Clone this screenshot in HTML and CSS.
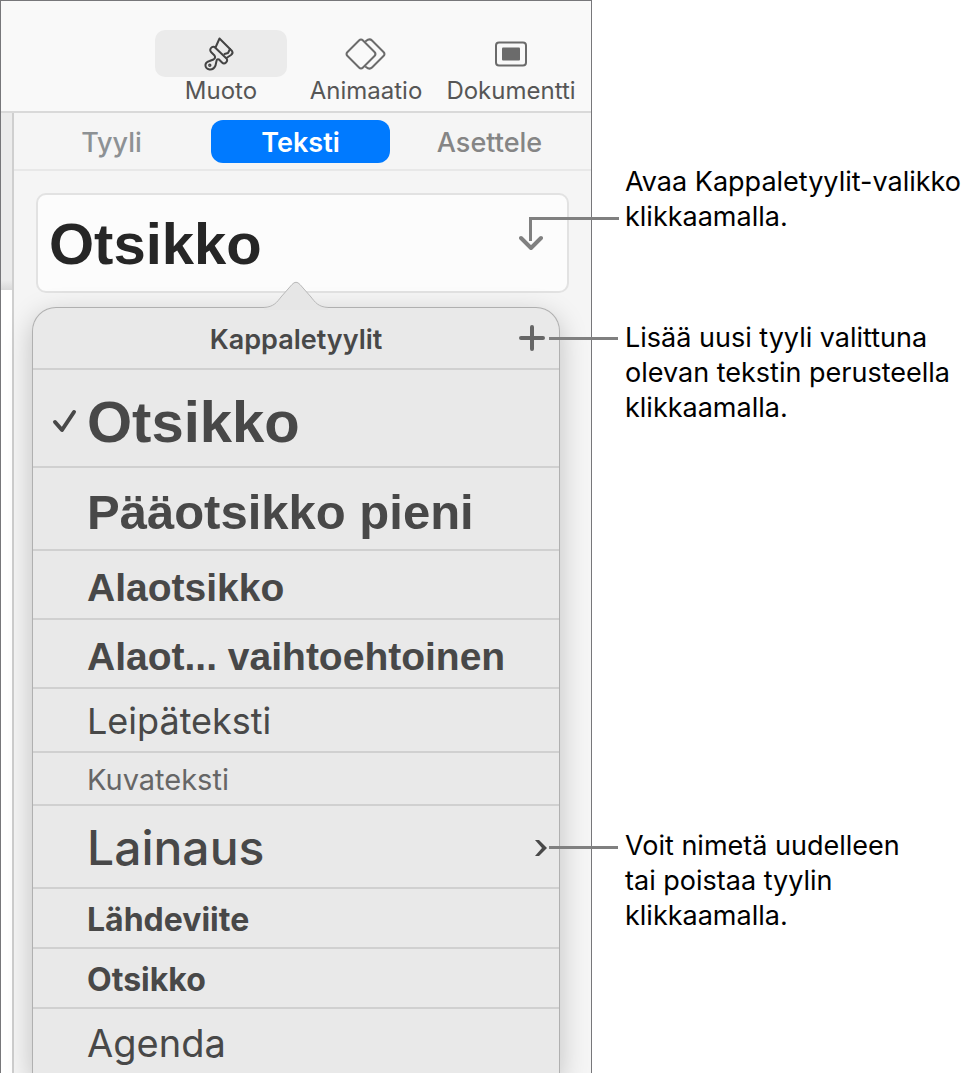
FILE: index.html
```
<!DOCTYPE html>
<html lang="fi">
<head>
  <meta charset="UTF-8">
  <meta name="viewport" content="width=device-width, initial-scale=1">
  <title>Kappaletyylit</title>
  <link rel="stylesheet" href="styles.css">
</head>
<body>
  <main class="figure">
    <div class="window">
      <!-- Työkalupalkki -->
      <header class="toolbar">
        <button type="button" class="tool active">
          <span class="tool-icon">
            <svg width="34" height="34" viewBox="0 0 34 34">
              <path d="M11.500 10.500 L15.500 1.500 L28 14 Q29.500 16 27 18 L22.500 21"/>
              <path d="M26 12 L24 16 L20.500 17"/>
              <path d="M10.500 10 L22.500 21.500 Q24 23.500 22 25.500 Q20 27.500 18 25.500 L15 22.500 Q13 21.500 12.500 24 L11.500 28.500 Q9.500 33 5.500 32.500 Q1 31.500 1.500 27.500 Q2 25 5.500 24 L9.500 22.500 Q12 21 10.500 18.500 L7 15 Q5.500 13 7 11 Q8.500 9 10.500 10Z"/>
              <circle cx="5.800" cy="28.300" r="0.700"/>
            </svg>
          </span>
          Muoto
        </button>
        <button type="button" class="tool">
          <span class="tool-icon">
            <svg width="42" height="34" viewBox="0 0 42 34">
              <path d="M14 3.500 Q16 1.500 18 3.500 L29.500 15 Q31.500 17 29.500 19 L18 30.500 Q16 32.500 14 30.500 L2.500 19 Q0.500 17 2.500 15Z"/>
              <path d="M21 4 Q24.500 1 27 3.500 L38.500 15 Q40.500 17 38.500 19 L27 30.500 Q24.500 33 21 30"/>
            </svg>
          </span>
          Animaatio
        </button>
        <button type="button" class="tool">
          <span class="tool-icon">
            <svg width="34" height="26" viewBox="0 0 34 26">
              <rect x="2" y="1.500" width="30" height="23" rx="3"/>
              <rect class="solid" x="8" y="6.500" width="18" height="13" rx="1"/>
            </svg>
          </span>
          Dokumentti
        </button>
      </header>

      <div class="workspace">
        <div class="canvas"></div>
        <aside class="sidebar">
          <nav class="tabs">
            <button type="button" class="tab tab-first">Tyyli</button>
            <button type="button" class="tab selected">Teksti</button>
            <button type="button" class="tab">Asettele</button>
          </nav>

          <div class="style-area">
            <button type="button" class="style-field">
              Otsikko
              <svg class="open-arrow" width="24" height="16" viewBox="0 0 24 16">
                <path d="M2 3 L12 13 L22 3"/>
              </svg>
              <span class="leader leader-open"></span>
            </button>

            <!-- Kappaletyylit-valikko -->
            <section class="popover">
              <svg class="popover-tip" width="64" height="29" viewBox="0 0 64 29">
                <path d="M0 26.500 C10 26 13 21 17 16 L28 3.500 Q32 -1 36 3.500 L47 16 C51 21 54 26 64 26.500 V29 H0Z"/>
                <path class="outline" d="M0 26.500 C10 26 13 21 17 16 L28 3.500 Q32 -1 36 3.500 L47 16 C51 21 54 26 64 26.500"/>
              </svg>
              <header class="popover-header">
                <h2>Kappaletyylit</h2>
                <button type="button" class="add-btn" aria-label="Lisää tyyli">
                  <svg width="26" height="26" viewBox="0 0 26 26">
                    <path d="M13 2 V24 M2 13 H24"/>
                  </svg>
                </button>
                <span class="leader leader-row"></span>
              </header>
              <ul class="style-list">
                <li class="style-title">
                  <svg class="check" width="26" height="26" viewBox="0 0 26 26">
                    <path d="M3 14 L10 22 L22 4"/>
                  </svg>
                  <button type="button">Otsikko</button>
                </li>
                <li class="style-title-small"><button type="button">Pääotsikko pieni</button></li>
                <li class="style-subtitle"><button type="button">Alaotsikko</button></li>
                <li class="style-subtitle"><button type="button">Alaot... vaihtoehtoinen</button></li>
                <li class="style-body"><button type="button">Leipäteksti</button></li>
                <li class="style-caption"><button type="button">Kuvateksti</button></li>
                <li class="style-quote">
                  <button type="button">Lainaus</button>
                  <button type="button" class="more-btn" aria-label="Muokkaa tyyliä">
                    <svg width="12" height="16" viewBox="0 0 12 16">
                      <path d="M0 0 H4 L12 8 L4 16 H0 L7 8Z"/>
                    </svg>
                  </button>
                  <span class="leader leader-row"></span>
                </li>
                <li class="style-label"><button type="button">Lähdeviite</button></li>
                <li class="style-label"><button type="button">Otsikko</button></li>
                <li class="style-agenda"><button type="button">Agenda</button></li>
              </ul>
            </section>
          </div>
        </aside>
      </div>
    </div>

    <!-- Selitteet -->
    <div class="callouts">
      <p>Avaa Kappaletyylit-valikko<br>klikkaamalla.</p>
      <p>Lisää uusi tyyli valittuna<br>olevan tekstin perusteella<br>klikkaamalla.</p>
      <p class="callout-quote">Voit nimetä uudelleen<br>tai poistaa tyylin<br>klikkaamalla.</p>
    </div>
  </main>
</body>
</html>
```
FILE: styles.css
```
* {
  box-sizing: border-box;
}
body {
  margin: 0;
  background: #fff;
  color: #000;
  font-family: Inter, Roboto, "Liberation Sans", sans-serif;
}
button {
  padding: 0;
  border: none;
  background: none;
  color: inherit;
  font: inherit;
  text-align: left;
  cursor: pointer;
}
svg {
  display: block;
  fill: none;
  stroke-linecap: round;
  stroke-linejoin: round;
}
.figure {
  display: grid;
  grid-template-columns: minmax(0, 1fr) 383px;
  min-height: 100vh;
}
.window {
  display: flex;
  flex-direction: column;
  border: 1px solid #77777a;
  border-bottom: none;
  background: #f5f5f5;
}

/* toolbar */
.toolbar {
  display: flex;
  justify-content: flex-end;
  gap: 13px;
  height: 112px;
  padding: 29px 14px 0 0;
  border-bottom: 2px solid #d9d9d9;
  background: #f9f9f9;
}
.tool {
  display: flex;
  flex-direction: column;
  align-items: center;
  width: 132px;
  color: #565656;
  font-size: 24px;
  line-height: 28px;
}
.tool-icon {
  display: flex;
  align-items: center;
  justify-content: center;
  width: 100%;
  height: 47px;
  border-radius: 10px;
}
.tool svg {
  stroke: #6b6b6b;
  stroke-width: 2;
}
.tool.active .tool-icon {
  background: #ebebeb;
}
.tool.active svg {
  stroke: #444;
}
.tool .solid {
  fill: #6b6b6b;
  stroke: none;
}

/* sidebar */
.workspace {
  display: flex;
  flex: 1;
}
.canvas {
  width: 11px;
  background: linear-gradient(#ececec 167px, #d9d9d9 177px, #fff 177px);
}
.sidebar {
  flex: 1;
  border-left: 2px solid #cfcfcf;
}
.tabs {
  display: grid;
  grid-template-columns: repeat(3, 1fr);
  gap: 10px;
  padding: 7px 12px 6px 8px;
  border-bottom: 2px solid #e8e8e8;
}
.tab {
  height: 43px;
  padding-top: 1px;
  border-radius: 12px;
  color: #858585;
  font-size: 27px;
  font-weight: 500;
  text-align: center;
}
.tab-first {
  color: #8d9194;
}
.tab.selected {
  background: #007aff;
  color: #fff;
  font-weight: 600;
}
.style-area {
  padding: 22px 22px 0;
}
.style-field {
  position: relative;
  display: flex;
  align-items: center;
  justify-content: space-between;
  width: 100%;
  height: 100px;
  padding: 0 24px 0 11px;
  border: 2px solid #e2e2e2;
  border-radius: 10px;
  background: #fcfcfc;
  color: #262626;
  font-family: "Liberation Sans", sans-serif;
  font-size: 58px;
  font-weight: bold;
}
.open-arrow {
  stroke: #808080;
  stroke-width: 4;
}

/* popover */
.popover {
  position: relative;
  margin: 14px 9px 0 -4px;
  border: 1px solid #b0b0b0;
  border-bottom: none;
  border-radius: 24px 24px 0 0;
  background: #e9e9e9;
  box-shadow: 0 8px 28px rgba(0, 0, 0, 0.22);
  color: #484848;
}
.popover-tip {
  position: absolute;
  bottom: 100%;
  left: 50%;
  margin: 0 0 -2px -32px;
  fill: #e6e6e6;
}
.popover-tip .outline {
  fill: none;
  stroke: #b8b8b8;
}
.popover-header {
  position: relative;
  display: flex;
  align-items: center;
  justify-content: center;
  height: 62px;
  border-bottom: 2px solid #d0d0d0;
}
.popover-header h2 {
  margin: 0;
  padding-top: 2px;
  font-size: 27px;
  font-weight: 600;
}
.add-btn {
  position: absolute;
  right: 14px;
}
.add-btn svg {
  stroke: #666;
  stroke-width: 4;
}
.style-list {
  margin: 0;
  padding: 0;
  list-style: none;
}
.style-list li {
  position: relative;
  display: flex;
  align-items: center;
  justify-content: space-between;
  padding: 2px 12px 0 54px;
  border-bottom: 2px solid #d0d0d0;
}
.style-list li:last-child {
  border-bottom: none;
}
.check {
  position: absolute;
  left: 19px;
  stroke: #484848;
  stroke-width: 4;
}
.style-list .style-title,
.style-list .style-title-small,
.style-list .style-subtitle {
  padding-top: 6px;
  font-family: "Liberation Sans", sans-serif;
  font-weight: bold;
}
.style-title {
  height: 98px;
  font-size: 58px;
}
.style-title-small {
  height: 83px;
  font-size: 49px;
}
.style-subtitle {
  height: 69px;
  font-size: 39px;
}
.style-body {
  height: 64px;
  font-size: 36px;
}
.style-caption {
  height: 53px;
  color: #666;
  font-size: 29px;
}
.style-quote {
  height: 83px;
  font-size: 48px;
  font-weight: 500;
}
.style-label {
  height: 60px;
  font-size: 32px;
  font-weight: 700;
}
.style-agenda {
  height: 66px;
  font-size: 38px;
}
.more-btn svg {
  fill: #484848;
}

/* leader lines and callouts */
.leader {
  position: absolute;
  border-top: 3px solid #808080;
}
.leader-open {
  top: 22px;
  right: -52px;
  width: 90px;
  height: 24px;
  border-left: 3px solid #808080;
}
.leader-row {
  top: 50%;
  right: -59px;
  width: 69px;
  margin-top: -1px;
}
.callouts {
  padding: 164px 0 0 33px;
  font-size: 27px;
  line-height: 35px;
  white-space: nowrap;
}
.callouts p {
  margin: 0 0 86px;
}
.callouts .callout-quote {
  margin: 403px 0 0;
}
```
